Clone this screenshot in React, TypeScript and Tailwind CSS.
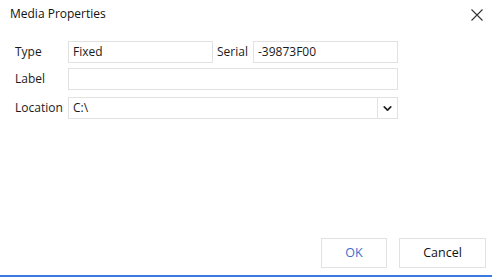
import { ChevronDown } from 'lucide-react';

export default function App() {
  const font = { fontFamily: '"Open Sans", "Noto Sans", sans-serif' };

  return (
    <div className="w-[492px] h-[277px] bg-white flex flex-col text-[12px] text-[#1a1a1a]" style={font}>
      {/* title bar */}
      <div className="h-[28px] flex items-center justify-between pl-[10px] pr-[8px]">
        <span className="text-[12px] text-[#111]">Media Properties</span>
        <svg width="14" height="14" viewBox="0 0 14 14" className="mt-[1px]">
          <path d="M1.5 1.5 L12.5 12.5 M12.5 1.5 L1.5 12.5" stroke="#333" strokeWidth="1.1" fill="none" />
        </svg>
      </div>

      {/* form */}
      <div className="pl-[15px] pt-[13px] flex flex-col">
        <div className="flex items-center h-[22px]">
          <span className="w-[53px]">Type</span>
          <div className="w-[145px] h-[22px] border border-[#e2e2e2] flex items-center pl-[4px]">Fixed</div>
          <span className="w-[36px] ml-[4px]">Serial</span>
          <div className="w-[145px] h-[22px] border border-[#e2e2e2] flex items-center pl-[4px]">-39873F00</div>
        </div>
        <div className="flex items-center h-[22px] mt-[5px]">
          <span className="w-[53px]">Label</span>
          <div className="w-[330px] h-[22px] border border-[#e2e2e2]"></div>
        </div>
        <div className="flex items-center h-[22px] mt-[7px]">
          <span className="w-[53px]">Location</span>
          <div className="w-[330px] h-[22px] border border-[#e2e2e2] flex items-center">
            <span className="flex-1 pl-[4px]">C:\</span>
            <div className="w-[20px] h-full border-l border-[#e2e2e2] flex items-center justify-center">
              <ChevronDown size={13} strokeWidth={3.2} className="text-[#222]" />
            </div>
          </div>
        </div>
      </div>

      <div className="flex-1" />

      {/* buttons */}
      <div className="flex justify-end gap-[12px] pr-[6px] pb-[7px]">
        <button className="w-[66px] h-[30px] border border-[#e2e2e2] bg-white text-[#3a6fd0] text-[12.5px]">OK</button>
        <button className="w-[87px] h-[30px] border border-[#e2e2e2] bg-white text-[#111] text-[12.5px]">Cancel</button>
      </div>
      <div className="h-[2px] bg-[#3b78e0]" />
    </div>
  );
}
